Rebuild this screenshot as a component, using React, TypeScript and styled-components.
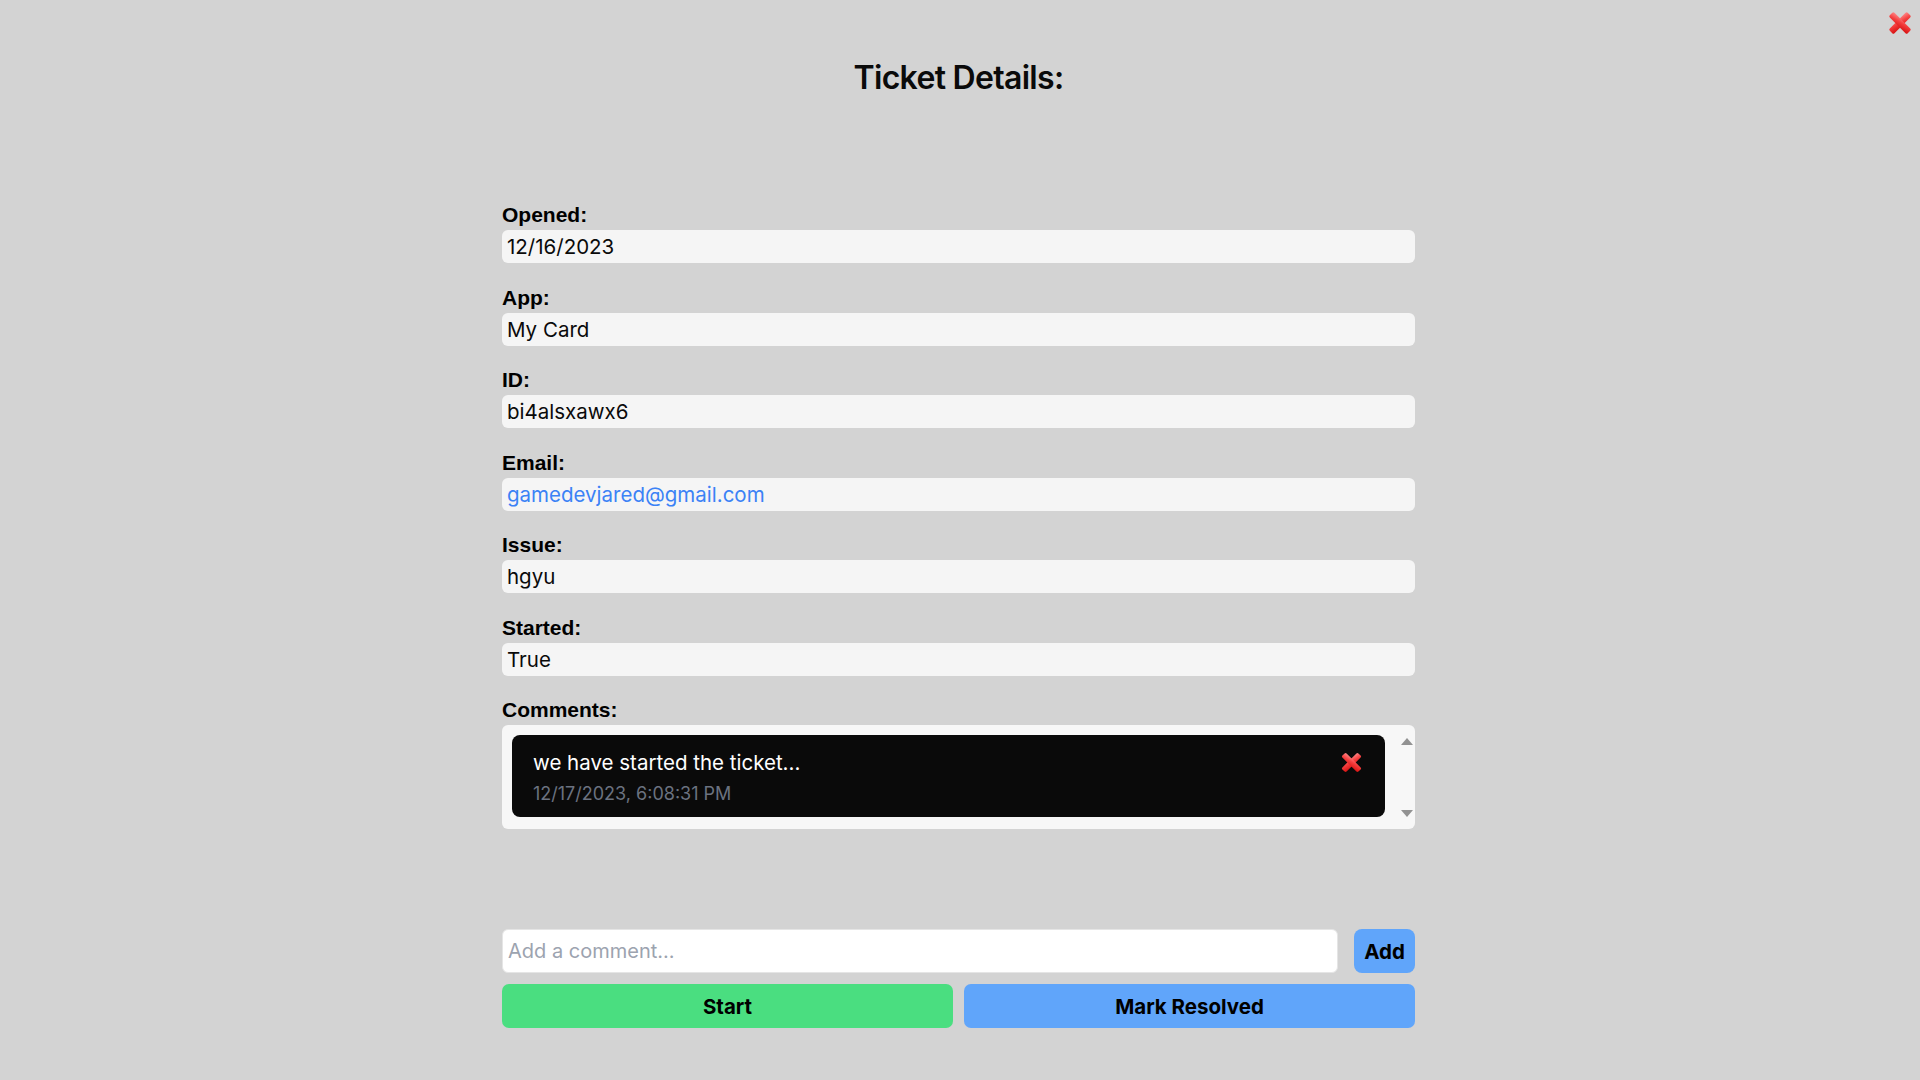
import React from "react";
import styled, { createGlobalStyle } from "styled-components";

const GlobalStyle = createGlobalStyle`
  html, body {
    margin: 0;
    padding: 0;
    background: #d3d3d3;
  }
  body {
    font-family: Inter, "Noto Sans", sans-serif;
    color: #000;
  }
  * { box-sizing: border-box; }
`;

const Page = styled.div`
  position: relative;
  min-height: 1080px;
  background: #d3d3d3;
  display: flex;
  flex-direction: column;
  align-items: center;
  padding-top: 58px;
  padding-right: 3px;
`;

const CloseCorner = styled.button`
  position: absolute;
  top: 9px;
  right: 6px;
  width: 28px;
  height: 28px;
  padding: 0;
  border: none;
  background: transparent;
  cursor: pointer;
  display: flex;
  align-items: center;
  justify-content: center;
`;

const Title = styled.h1`
  margin: 0;
  font-family: Inter, sans-serif;
  font-weight: 600;
  font-size: 32px;
  line-height: 39px;
  letter-spacing: -0.7px;
  color: #0a0a0a;
`;

const Form = styled.div`
  width: 913px;
  margin-top: 106px;
  display: flex;
  flex-direction: column;
  gap: 22.5px;
`;

const FieldGroup = styled.div`
  display: flex;
  flex-direction: column;
  gap: 3px;
`;

const Label = styled.label`
  display: block;
  font-family: "Liberation Sans", Arial, sans-serif;
  font-weight: 700;
  font-size: 21px;
  line-height: 24px;
  color: #000;
`;

const ValueBox = styled.div<{ $link?: boolean }>`
  height: 33px;
  display: flex;
  align-items: center;
  padding: 0 5px;
  border-radius: 6px;
  background: #f5f5f5;
  font-family: Inter, sans-serif;
  font-size: 20.5px;
  color: ${(p) => (p.$link ? "#3b82f6" : "#0a0a0a")};
`;

const CommentsBox = styled.div`
  display: flex;
  background: #f7f7f7;
  border-radius: 6px;
  padding: 10px 0 10px 10px;
`;

const CommentsList = styled.div`
  flex: 1;
  height: 84px;
  overflow: hidden;
  padding-right: 13px;
`;

const ScrollRail = styled.div`
  width: 17px;
  height: 84px;
  display: flex;
  flex-direction: column;
  justify-content: space-between;
  align-items: center;
`;

const ScrollArrow = styled.div`
  width: 17px;
  height: 12px;
  display: flex;
  align-items: center;
  justify-content: center;
`;

const CommentCard = styled.div`
  position: relative;
  background: #0a0a0a;
  border-radius: 8px;
  padding: 16px 21px 12px;
  display: flex;
  flex-direction: column;
  gap: 7.5px;
`;

const CommentText = styled.div`
  font-family: Inter, sans-serif;
  font-size: 20.5px;
  line-height: 24px;
  color: #ffffff;
`;

const CommentDate = styled.div`
  font-family: Inter, sans-serif;
  font-size: 18px;
  line-height: 22px;
  color: #6b7280;
`;

const DeleteButton = styled.button`
  position: absolute;
  top: 15px;
  right: 21px;
  width: 25px;
  height: 25px;
  padding: 0;
  border: none;
  background: transparent;
  cursor: pointer;
  display: flex;
  align-items: center;
  justify-content: center;
`;

const CommentForm = styled.div`
  width: 913px;
  margin-top: 100px;
  display: flex;
  gap: 16px;
`;

const CommentInput = styled.input`
  flex: 1;
  height: 44px;
  border: 1px solid #e5e5e5;
  border-radius: 6px;
  background: #ffffff;
  padding: 0 5px;
  font-family: Inter, sans-serif;
  font-size: 20px;
  color: #0a0a0a;
  outline: none;
  &::placeholder {
    color: #9ca3af;
  }
`;

const AddButton = styled.button`
  width: 61px;
  height: 44px;
  border: none;
  border-radius: 8px;
  background: #60a5fa;
  font-family: Inter, sans-serif;
  font-weight: 700;
  font-size: 20.5px;
  color: #000;
  cursor: pointer;
  padding: 0;
`;

const ActionRow = styled.div`
  width: 913px;
  margin-top: 11px;
  display: flex;
  gap: 11px;
`;

const ActionButton = styled.button<{ $variant: "green" | "blue" }>`
  flex: 1;
  height: 44px;
  border: none;
  border-radius: 7px;
  background: ${(p) => (p.$variant === "green" ? "#4ade80" : "#60a5fa")};
  font-family: Inter, sans-serif;
  font-weight: 700;
  font-size: 20.5px;
  color: #000;
  cursor: pointer;
`;

const RedX: React.FC<{ size: number; id: string }> = ({ size, id }) => (
  <svg width={size} height={size} viewBox="0 0 32 32" aria-hidden="true">
    <defs>
      <linearGradient id={id} x1="0" y1="0" x2="1" y2="1">
        <stop offset="0" stopColor="#ff8a8a" />
        <stop offset="0.45" stopColor="#f43f3f" />
        <stop offset="1" stopColor="#d60f0f" />
      </linearGradient>
    </defs>
    <g transform="rotate(45 16 16)">
      <rect x="12.2" y="1.5" width="7.6" height="29" rx="1.8" fill={`url(#${id})`} />
      <rect x="1.5" y="12.2" width="29" height="7.6" rx="1.8" fill={`url(#${id})`} />
    </g>
  </svg>
);

const Triangle: React.FC<{ dir: "up" | "down" }> = ({ dir }) => (
  <svg width="12" height="7" viewBox="0 0 12 7" aria-hidden="true">
    <path d={dir === "up" ? "M0 7 L6 0 L12 7 Z" : "M0 0 L6 7 L12 0 Z"} fill="#929292" />
  </svg>
);

const fields: { label: string; value: string; link?: boolean }[] = [
  { label: "Opened:", value: "12/16/2023" },
  { label: "App:", value: "My Card" },
  { label: "ID:", value: "bi4alsxawx6" },
  { label: "Email:", value: "gamedevjared@gmail.com", link: true },
  { label: "Issue:", value: "hgyu" },
  { label: "Started:", value: "True" },
];

export default function App() {
  return (
    <>
      <GlobalStyle />
      <Page>
        <CloseCorner aria-label="Close">
          <RedX size={28} id="gradCorner" />
        </CloseCorner>
        <Title>Ticket Details:</Title>
        <Form>
          {fields.map((f) => (
            <FieldGroup key={f.label}>
              <Label>{f.label}</Label>
              <ValueBox $link={f.link}>{f.value}</ValueBox>
            </FieldGroup>
          ))}
          <FieldGroup>
            <Label>Comments:</Label>
            <CommentsBox>
              <CommentsList>
                <CommentCard>
                  <CommentText>we have started the ticket...</CommentText>
                  <CommentDate>12/17/2023, 6:08:31 PM</CommentDate>
                  <DeleteButton aria-label="Delete comment">
                    <RedX size={25} id="gradCard" />
                  </DeleteButton>
                </CommentCard>
              </CommentsList>
              <ScrollRail>
                <ScrollArrow>
                  <Triangle dir="up" />
                </ScrollArrow>
                <ScrollArrow>
                  <Triangle dir="down" />
                </ScrollArrow>
              </ScrollRail>
            </CommentsBox>
          </FieldGroup>
        </Form>
        <CommentForm>
          <CommentInput placeholder="Add a comment..." />
          <AddButton>Add</AddButton>
        </CommentForm>
        <ActionRow>
          <ActionButton $variant="green">Start</ActionButton>
          <ActionButton $variant="blue">Mark Resolved</ActionButton>
        </ActionRow>
      </Page>
    </>
  );
}
